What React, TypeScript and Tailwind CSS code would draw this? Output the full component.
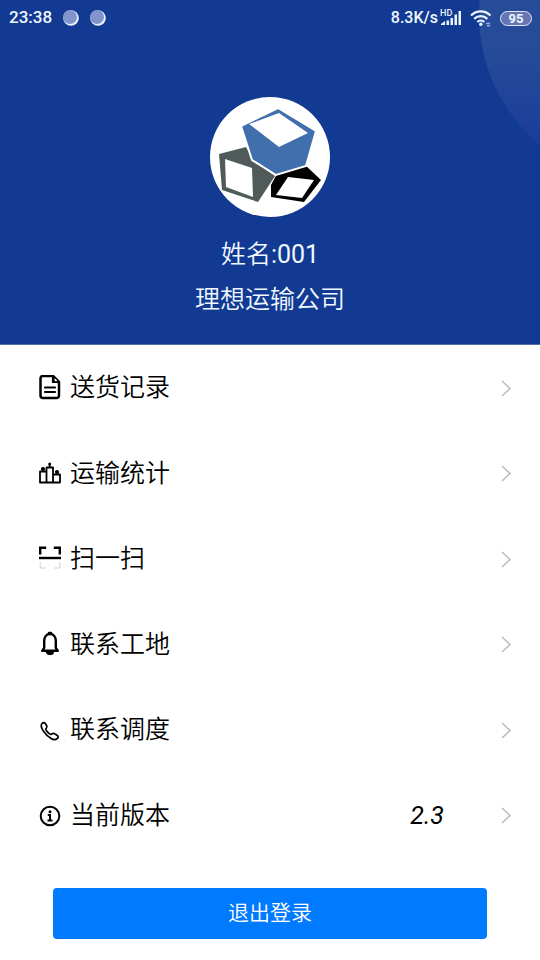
import type { ReactNode } from "react";

const stroke = {
  fill: "none",
  stroke: "currentColor",
  strokeLinecap: "round" as const,
  strokeLinejoin: "round" as const,
};

const iconSize = "h-[26px] w-6";

function DocumentIcon() {
  return (
    <svg viewBox="0 0 24 26" className={iconSize} aria-hidden="true" {...stroke} strokeWidth={2.5}>
      <path d="M5 .9h10L21 7v13.5a2.500 2.500 0 0 1-2.500 2.500H5a2.500 2.500 0 0 1-2.500-2.500V3.400A2.500 2.500 0 0 1 5 .9Z" />
      <path d="M14.500 1.500V7.500h6Z" strokeWidth={1.2} fill="currentColor" />
      <path d="M17 4.200v1.500h1.500Z" fill="#fff" stroke="#fff" strokeWidth={1} />
      <path d="M7 12.500h10M7 17h10" strokeWidth={2.2} />
    </svg>
  );
}

function StatsIcon() {
  return (
    <svg viewBox="0 0 24 26" className={iconSize} aria-hidden="true" {...stroke} strokeWidth={1.8}>
      <path d="M8.500 22.500H2v-11h6.500M8.500 22.500V7.500h6.500v15ZM15 22.500h7v-8h-7" />
      <path d="M11.700 4v3" />
      <circle cx="5" cy="9" r="1.200" fill="currentColor" />
      <circle cx="11.700" cy="4" r="0.600" fill="currentColor" />
      <circle cx="19" cy="12" r="1.200" fill="currentColor" />
    </svg>
  );
}

function ScanIcon() {
  return (
    <svg viewBox="0 0 24 26" className={iconSize} aria-hidden="true" fill="none" stroke="currentColor">
      <path d="M2.200 8.500V1.800h6M15.800 1.800h6v6.700" strokeWidth={2.4} />
      <path d="M1 12h22" strokeWidth={2.4} />
      <path d="M2.200 16v6h5.500M16.300 22h5.500v-6" stroke="#d0d0d0" strokeWidth={1} />
    </svg>
  );
}

function BellIcon() {
  return (
    <svg viewBox="0 0 24 26" className={iconSize} aria-hidden="true" {...stroke} strokeWidth={2.4}>
      <path d="M4.200 19.800h15.600l-2-3V10c0-4-2.300-7-5.800-7s-5.800 3-5.800 7v6.800Z" />
      <path d="M11 2h2" strokeWidth={2.4} />
      <path d="M8.500 21.500h7a3.500 2.200 0 0 1-7 0Z" fill="currentColor" strokeWidth={1} />
    </svg>
  );
}

function PhoneIcon() {
  return (
    <svg viewBox="0 0 24 26" className={iconSize} aria-hidden="true" {...stroke} strokeWidth={1.7}>
      <path d="M4 6.500c1.600-1.500 2.800-1.100 3.600.3l1.200 2.200c.5 1-.1 1.700-.8 2.600-.5.700 0 1.800 1.600 3.600 1.800 1.900 3 2.500 3.800 2 1-.700 1.600-1.200 2.700-.6l3 1.700c1.300.9 1.400 1.900.3 3-1.500 1.500-3.900 1.600-6.300.2-2.500-1.400-5.200-3.700-7.200-6.700C3.300 11.100 2.400 8.200 4 6.500Z" />
    </svg>
  );
}

function InfoIcon() {
  return (
    <svg viewBox="0 0 24 26" className={iconSize} aria-hidden="true" fill="none" stroke="currentColor">
      <circle cx="12" cy="14" r="9.300" strokeWidth={2} />
      <circle cx="12" cy="9.800" r="1.500" fill="currentColor" stroke="none" />
      <path d="M9.800 13H12v5.300M9.500 18.500h5" strokeWidth={2} />
    </svg>
  );
}

function Chevron() {
  return (
    <svg viewBox="0 0 12 18" className="h-[18px] w-3" aria-hidden="true" fill="none" stroke="#bcbcbc" strokeWidth={1.6}>
      <path d="M2 2 10 9.500l-8 7.500" />
    </svg>
  );
}

function NoticeDot() {
  return (
    <svg viewBox="0 0 16 16" className="size-4" aria-hidden="true">
      <circle cx="8" cy="8" r="7.800" fill="#eaf2ff" />
      <circle cx="7" cy="7" r="7" fill="#8194cb" />
    </svg>
  );
}

function Logo() {
  return (
    <svg viewBox="0 0 120 120" className="size-[120px]" role="img" aria-label="理想运输公司">
      <circle cx="60" cy="60" r="60" fill="#fff" />
      <path d="m9 57 27-7 8 14 21 15-17 26-36-12Z" fill="#4f5a59" />
      <path d="m15 62 27 9 1 29-27-10Z" fill="#fff" />
      <path d="m67 77 27-10 17 16-17 22-33-5V88Z" fill="#000" />
      <path d="m78 80 26 3-12 18-26-3Z" fill="#fff" />
      <path d="m31 29 37-18 38 23-10 35-30 9-24-15Z" fill="#416fae" stroke="#fff" strokeWidth="2" />
      <path d="m39 27 30-11 29 20-29 14Z" fill="#fff" />
    </svg>
  );
}

function StatusBar() {
  return (
    <div className="relative flex h-9 items-center justify-between pr-2 pl-[9px] text-base font-medium">
      <div className="flex items-center gap-[11px]">
        <span className="text-[17px]">23:38</span>
        <NoticeDot />
        <NoticeDot />
      </div>
      <div className="flex items-center">
        <span>8.3K/s</span>
        <svg viewBox="0 0 22 18" className="ml-0.5 h-[18px] w-[22px]" aria-hidden="true" fill="#eaf4ff">
          <text x="0" y="7" fontSize="9" fontWeight="500">HD</text>
          <path d="M1 16v-1l4-3v4ZM6.500 11.500H9V16H6.500ZM10.500 9H13v7h-2.500ZM14.500 5.500H17V16h-2.500ZM18.500 2H21v14h-2.500Z" />
        </svg>
        <svg viewBox="0 0 22 18" className="ml-2 h-[18px] w-[22px]" aria-hidden="true" fill="none" stroke="#eaf4ff" strokeWidth={2.2}>
          <path d="M1 6.500c5.500-5.500 14-5.500 19.500 0M4.200 9.900c3.700-3.700 9.400-3.700 13.100 0M7.300 13c2-2 5-2 7 0" />
          <circle cx="10.800" cy="15.200" r="1.700" fill="#eaf4ff" stroke="none" />
          <path d="M16 14.500h4M17 16.700h3" strokeWidth={1.4} stroke="#8fb1e8" />
        </svg>
        <span className="ml-2 flex h-[15px] w-8 items-center justify-center rounded-full border border-[#dfeaff] bg-[#6576b3] text-[13px] leading-none font-bold">
          95
        </span>
      </div>
    </div>
  );
}

type Item = { label: string; icon: ReactNode; value?: string };

const items: Item[] = [
  { label: "送货记录", icon: <DocumentIcon /> },
  { label: "运输统计", icon: <StatsIcon /> },
  { label: "扫一扫", icon: <ScanIcon /> },
  { label: "联系工地", icon: <BellIcon /> },
  { label: "联系调度", icon: <PhoneIcon /> },
  { label: "当前版本", icon: <InfoIcon />, value: "2.3" },
];

export default function App() {
  return (
    <div className="min-h-screen bg-white font-[Roboto,'Noto_Sans_CJK_SC',sans-serif] text-black">
      <header className="relative overflow-hidden border-b border-[#5370ad] bg-[#123a92] pb-[22px] text-[#f0f8ff]">
        <div className="absolute -top-[154px] -right-[277px] size-[338px] rounded-full bg-linear-to-b from-[#264b98] from-60% to-[#1b3c9a] to-90%" />
        <StatusBar />
        <div className="flex flex-col items-center pt-[61px]">
          <Logo />
          <h1 className="mt-[15px] text-[25px] leading-[45px] font-[350]">
            姓名<span className="font-normal">:001</span>
          </h1>
          <p className="text-[25px] leading-[45px] font-[350]">理想运输公司</p>
        </div>
      </header>
      <main>
        <ul className="grid min-h-[513px] auto-rows-fr">
          {items.map((item) => (
            <li key={item.label} className="flex">
              <button type="button" className="flex w-full items-center pr-7 pl-[38px] text-left text-[25px] font-[350]">
                {item.icon}
                <span className="ml-2">{item.label}</span>
                {item.value && <em className="ml-auto pr-14 font-normal">{item.value}</em>}
                <span className={item.value ? "" : "ml-auto"}>
                  <Chevron />
                </span>
              </button>
            </li>
          ))}
        </ul>
        <div className="px-[53px] pt-[30px] pb-[21px]">
          <button type="button" className="h-[51px] w-full rounded bg-[#007aff] text-[21px] font-[350] text-white">
            退出登录
          </button>
        </div>
      </main>
    </div>
  );
}
